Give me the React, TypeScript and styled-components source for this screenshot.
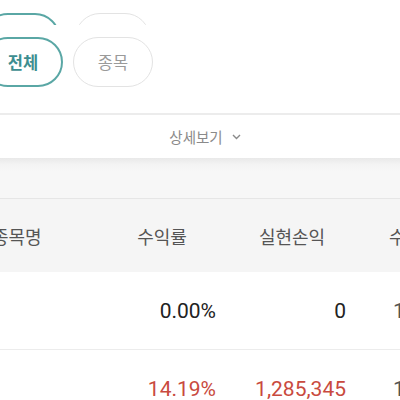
import styled, { createGlobalStyle } from "styled-components";

const GlobalStyle = createGlobalStyle`
  html, body {
    margin: 0;
    padding: 0;
    background: #ffffff;
    overflow: hidden;
  }
  body {
    font-family: "Noto Sans CJK KR", Roboto, sans-serif;
  }
`;

const Page = styled.div`
  width: 400px;
  height: 400px;
  overflow: hidden;
  background: #ffffff;
`;

const GhostRow = styled.div`
  height: 12px;
  padding-top: 13px;
  overflow: hidden;
  display: flex;
  gap: 15px;
  margin-left: -17px;
`;

const PillRow = styled.div`
  display: flex;
  gap: 10px;
  margin: 12px 0 0 -17px;
  height: 50px;
`;

const Pill = styled.div<{ $active?: boolean; $w?: number }>`
  box-sizing: border-box;
  flex: none;
  width: ${(p) => p.$w ?? 80}px;
  height: 50px;
  border-radius: 25px;
  border: ${(p) => (p.$active ? "2px solid #5aa7a5" : "1.5px solid #e3e3e3")};
  display: flex;
  align-items: center;
  justify-content: center;
  font-size: 16.5px;
  font-weight: ${(p) => (p.$active ? 700 : 400)};
  color: ${(p) => (p.$active ? "#3d8e90" : "#9a9a9a")};
`;

const Divider = styled.div`
  height: 2px;
  background: #ececec;
  margin-top: 26px;
`;

const DetailToggle = styled.div`
  height: 43px;
  display: flex;
  align-items: center;
  justify-content: center;
  gap: 9px;
  font-size: 14.5px;
  color: #8a8a8a;
  padding-left: 10px;
`;

const Gap = styled.div`
  height: 40px;
  background: linear-gradient(#e9e9e9 0px, #f4f4f4 7px, #f7f7f7 14px);
  border-bottom: 1px solid #e6e6e6;
`;

const Row = styled.div<{ $head?: boolean }>`
  display: grid;
  grid-template-columns: 116px 130px 130px 130px;
  align-items: center;
  margin-left: -8px;
  height: ${(p) => (p.$head ? 73 : 77)}px;
  background: ${(p) => (p.$head ? "#f5f5f5" : "#ffffff")};
  border-bottom: ${(p) => (p.$head ? "none" : "1px solid #ececec")};
`;

const HeadCell = styled.div<{ $left?: boolean }>`
  font-size: 18px;
  color: #555555;
  text-align: ${(p) => (p.$left ? "left" : "center")};
  padding-right: ${(p) => (p.$left ? 0 : 22)}px;
  white-space: nowrap;
`;

const ValueCell = styled.div<{ $tone?: "up" | "plain" | "muted" }>`
  font-family: Roboto, "Noto Sans CJK KR", sans-serif;
  font-size: 21px;
  text-align: right;
  padding-right: ${(p) => (p.$tone === "muted" ? 14 : 22)}px;
  white-space: nowrap;
  color: ${(p) =>
    p.$tone === "up" ? "#c94a3e" : p.$tone === "muted" ? "#555555" : "#222222"};
`;

const NameCell = styled.div`
  font-size: 18px;
  color: #222222;
`;

const rows = [
  { name: "", rate: "0.00%", profit: "0", amount: "1,000,000", tone: "plain" as const },
  { name: "", rate: "14.19%", profit: "1,285,345", amount: "1,000,000", tone: "up" as const },
];

export default function App() {
  return (
    <Page>
      <GlobalStyle />
      <GhostRow>
        <Pill $active $w={77} />
        <Pill $w={75} />
      </GhostRow>
      <PillRow>
        <Pill $active>전체</Pill>
        <Pill>종목</Pill>
      </PillRow>
      <Divider />
      <DetailToggle>
        상세보기
        <svg width="9" height="6" viewBox="0 0 9 6" fill="none">
          <path d="M1 1l3.5 3.5L8 1" stroke="#8a8a8a" strokeWidth="1.4" />
        </svg>
      </DetailToggle>
      <Gap />
      <Row $head>
        <HeadCell $left>종목명</HeadCell>
        <HeadCell>수익률</HeadCell>
        <HeadCell>실현손익</HeadCell>
        <HeadCell>수익금액</HeadCell>
      </Row>
      {rows.map((r, i) => (
        <Row key={i}>
          <NameCell>{r.name}</NameCell>
          <ValueCell $tone={r.tone}>{r.rate}</ValueCell>
          <ValueCell $tone={r.tone}>{r.profit}</ValueCell>
          <ValueCell $tone="muted">{r.amount}</ValueCell>
        </Row>
      ))}
    </Page>
  );
}
